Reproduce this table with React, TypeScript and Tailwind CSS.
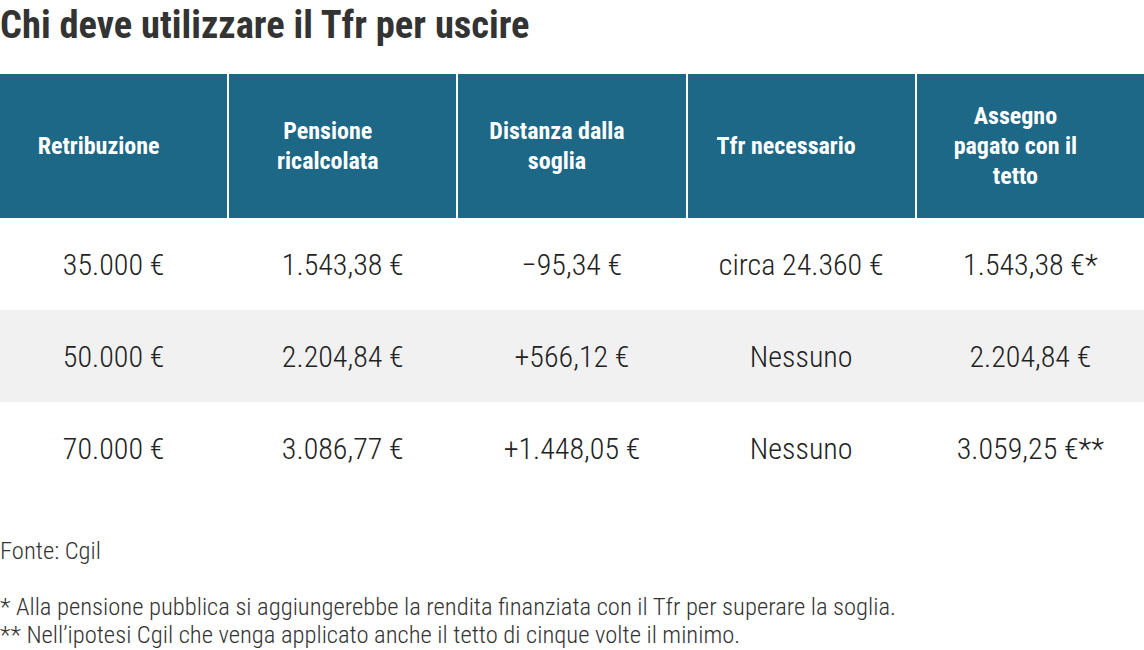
const headers: string[][] = [
  ["Retribuzione"],
  ["Pensione", "ricalcolata"],
  ["Distanza dalla", "soglia"],
  ["Tfr necessario"],
  ["Assegno", "pagato con il", "tetto"],
];

const rows: string[][] = [
  ["35.000 €", "1.543,38 €", "−95,34 €", "circa 24.360 €", "1.543,38 €*"],
  ["50.000 €", "2.204,84 €", "+566,12 €", "Nessuno", "2.204,84 €"],
  ["70.000 €", "3.086,77 €", "+1.448,05 €", "Nessuno", "3.059,25 €**"],
];

export default function App() {
  return (
    <div className="w-[1144px] h-[650px] overflow-hidden bg-white font-['Roboto_Condensed',sans-serif]">
      <h1 className="h-[74px] pt-[2px] text-[38.5px] font-bold leading-[46px] text-[#333]">
        Chi deve utilizzare il Tfr per uscire
      </h1>

      <div>
        <div className="grid h-[144px] grid-cols-5 gap-x-[2px]">
          {headers.map((lines, i) => (
            <div
              key={i}
              className="flex flex-col items-center justify-center bg-[#1d6787] pr-[30px] text-center text-[24px] font-bold leading-[30px] text-white"
            >
              {lines.map((l) => (
                <span key={l}>{l}</span>
              ))}
            </div>
          ))}
        </div>

        {rows.map((row, r) => (
          <div
            key={r}
            className={`grid h-[92px] grid-cols-5 gap-x-[2px] items-center text-center text-[30px] font-light text-[#222] ${
              r === 1 ? "bg-[#f1f1f1]" : "bg-white"
            }`}
          >
            {row.map((cell, c) => (
              <div key={c}>{cell}</div>
            ))}
          </div>
        ))}
      </div>

      <div className="mt-[43px] text-[24.6px] font-light leading-[28px] text-[#333]">
        <p>Fonte: Cgil</p>
        <p className="mt-[28px]">* Alla pensione pubblica si aggiungerebbe la rendita finanziata con il Tfr per superare la soglia.</p>
        <p>** Nell’ipotesi Cgil che venga applicato anche il tetto di cinque volte il minimo.</p>
      </div>
    </div>
  );
}
